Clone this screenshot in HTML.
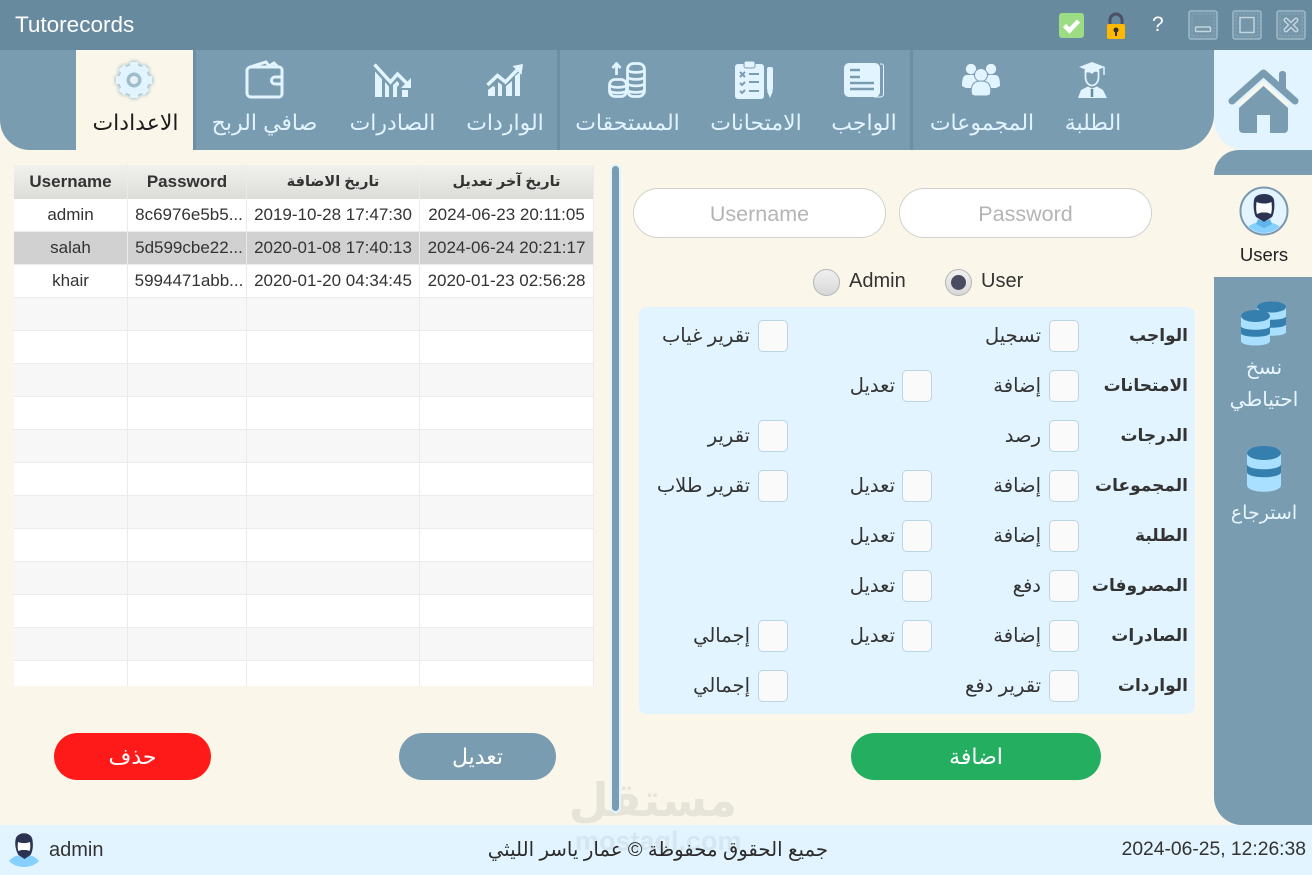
<!DOCTYPE html>
<html lang="ar"><head><meta charset="utf-8"><title>Tutorecords</title>
<style>
*{box-sizing:border-box;margin:0;padding:0}
html,body{width:1312px;height:875px;overflow:hidden;background:#faf7ea}
body{position:relative;font-family:"Liberation Sans","DejaVu Sans",sans-serif;color:#2b2b2b}
div,svg{position:absolute}
.nl{position:absolute;top:108px;height:30px;line-height:30px;font-size:22px;color:#e1f4ff;text-align:center;white-space:nowrap;direction:rtl}
.sep{top:50px;width:3px;height:100px;background:#6c8fa5}
.cb{width:30px;height:32px;background:#fafafa;border:1px solid #bcd5e3;border-radius:5px}
.lb{font-size:19.500px;line-height:30px;height:30px;white-space:nowrap;direction:rtl;text-align:right;color:#333}
.bl{font-size:17px;font-weight:bold;line-height:30px;height:30px;white-space:nowrap;direction:rtl;text-align:right;right:124px;color:#333}
.cell{font-size:17px;line-height:33px;height:33px;text-align:center;white-space:nowrap;color:#333;overflow:hidden}
.h{top:165px;height:34px;line-height:34px;font-size:17px;font-weight:bold;text-align:center;color:#333;background:linear-gradient(#f1f1ee,#dcdcd8);white-space:nowrap}
.inp{top:188px;height:50px;width:253px;background:#fff;border:1px solid #d0d0cc;border-radius:25px;text-align:center;line-height:50px;font-size:21.500px;color:#b4b4b4}
.btn{top:733px;height:47px;border-radius:24px;color:#fff;text-align:center;line-height:48px;font-size:22px}
.tx{font-size:20px;white-space:nowrap;line-height:26px}
</style></head><body>

<!-- title bar -->
<div style="left:0;top:0;width:1312px;height:50px;background:#678a9f"></div>
<div style="left:15px;top:10px;font-size:22.500px;line-height:30px;color:#fff">Tutorecords</div>
<svg style="left:1059px;top:13px" width="25" height="25" viewBox="0 0 25 25"><rect width="25" height="25" rx="3" fill="#9bdc85"/><path d="M5.500 12.500l5 5 9-9.500" fill="none" stroke="#fff" stroke-width="4.500"/></svg>
<svg style="left:1105px;top:12px" width="22" height="27" viewBox="0 0 22 27"><path d="M5 13V8a6 6 0 0 1 12 0v5" fill="none" stroke="#4c5065" stroke-width="3"/><rect x="2" y="12" width="18" height="15" rx="2" fill="#ffba00"/><circle cx="11" cy="18" r="2.500" fill="#333"/><rect x="10" y="18" width="2" height="6" fill="#333"/></svg>
<div style="left:1152px;top:10px;font-size:21px;line-height:30px;color:#fff">?</div>
<svg style="left:1188px;top:10px" width="118" height="30" viewBox="0 0 118 30" fill="none" stroke="#9db9c8" stroke-width="1.500"><rect x="1" y="1" width="28" height="28" rx="2" fill="#7595a9"/><rect x="4" y="4" width="22" height="22" stroke-dasharray="2 1.500" stroke-width="1" opacity=".6"/><rect x="7.500" y="17" width="15" height="4.500" rx="1" stroke="#c2d6e0"/><rect x="45" y="1" width="28" height="28" rx="2" fill="#7595a9"/><rect x="48" y="4" width="22" height="22" stroke-dasharray="2 1.500" stroke-width="1" opacity=".6"/><rect x="52" y="7.500" width="14" height="15" stroke="#c2d6e0"/><rect x="89" y="1" width="28" height="28" rx="2" fill="#7595a9"/><rect x="92" y="4" width="22" height="22" stroke-dasharray="2 1.500" stroke-width="1" opacity=".6"/><path d="M98 10l10 10M108 10L98 20" stroke="#c2d6e0" stroke-width="5" stroke-linecap="round"/><path d="M98 10l10 10M108 10L98 20" stroke="#7595a9" stroke-width="2" stroke-linecap="round"/></svg>

<!-- nav -->
<div style="left:0;top:50px;width:1214px;height:100px;background:#7a9cb1;border-radius:0 0 36px 30px"></div>
<div style="left:76px;top:50px;width:117px;height:100px;background:#faf7ea"></div>
<div class="sep" style="left:193px"></div>
<div class="sep" style="left:557px"></div>
<div class="sep" style="left:910px"></div>

<!-- nav icons -->
<svg style="left:113px;top:59px;filter:drop-shadow(0 0 2px #7a9cb1)" width="42" height="42" viewBox="0 0 42 42"><circle cx="21" cy="21" r="15" fill="#e1f4ff"/><g stroke="#e1f4ff" stroke-width="8"><path d="M21 3v7M21 32v7M3 21h7M32 21h7M8.300 8.300l5 5M28.700 28.700l5 5M33.700 8.300l-5 5M13.300 28.700l-5 5"/></g><circle cx="21" cy="21" r="7.500" fill="#9fbccd"/><circle cx="21" cy="21" r="4" fill="#e8f2f2"/></svg>
<svg style="left:245px;top:60px" width="40" height="39" viewBox="0 0 40 39" fill="none" stroke="#e1f4ff" stroke-width="3"><path d="M2 10v23a4 4 0 0 0 4 4h28a3 3 0 0 0 3-3V10a3 3 0 0 0-3-3H6a4 4 0 0 0-4 3z"/><path d="M5 7L21 2l3 4 5-3 4 4" /><path d="M37 17h-7a3.500 3.500 0 0 0 0 7h7"/></svg>
<svg style="left:373px;top:63px" width="39" height="34" viewBox="0 0 39 34" fill="#e1f4ff"><path d="M1.500 1.500l16 17.500 7-8 10 10" fill="none" stroke="#e1f4ff" stroke-width="3.500"/><path d="M38 15v10H28z"/><path d="M2 8.500l7 7.500v18H2zM12 19l4 4.500V34h-4zM20 22l4-4 2 2v2l-2 2v10h-4zM29 27h6v7h-6z"/></svg>
<svg style="left:486px;top:64px" width="38" height="32" viewBox="0 0 38 32" fill="#e1f4ff"><path d="M1.500 21l10-9.500 8 6.500L33 4" fill="none" stroke="#e1f4ff" stroke-width="3.500"/><path d="M37 0l-1.500 11-9-9z"/><path d="M2 32v-6l5-4 2 1v9zM12 32V18l4 3v11zM20 32V22l6-5v15zM29 32V12l5-4v24z"/></svg>
<svg style="left:608px;top:62px" width="38" height="36" viewBox="0 0 38 36"><g fill="none" stroke="#e1f4ff" stroke-width="2.800"><path d="M8.500 13V3"/><path d="M4.500 6l4-4.500 4 4.500"/><rect x="19.500" y="1.500" width="17" height="33" rx="6"/><path d="M19.500 8.500c4 2.500 13 2.500 17 0M19.500 15.500c4 2.500 13 2.500 17 0M19.500 22c4 2.500 13 2.500 17 0M19.500 28.500c4 2.500 13 2.500 17 0"/><rect x="1.500" y="17.500" width="17" height="17" rx="5.500" fill="#7a9cb1"/><path d="M1.500 23.500c4 2.500 13 2.500 17 0M1.500 29c4 2.500 13 2.500 17 0"/></g></svg>
<svg style="left:735px;top:60px" width="40" height="39" viewBox="0 0 40 39"><rect x="0" y="4" width="29" height="35" rx="3" fill="#e1f4ff"/><rect x="9" y="1" width="11" height="7" rx="2" fill="#e1f4ff" stroke="#7a9cb1"/><rect x="32" y="7" width="6" height="24" rx="2" fill="#e1f4ff"/><path d="M32 31h6l-3 7z" fill="#e1f4ff"/><g stroke="#7a9cb1" stroke-width="2" fill="none"><path d="M5 12l5 5M10 12l-5 5M5 23l2 2 3-3M5 31l2 2 3-3M14 14h10M14 22h10M14 31h10"/></g></svg>
<svg style="left:844px;top:62px" width="40" height="36" viewBox="0 0 40 36"><path d="M36 2h1.500a2 2 0 0 1 2 2v28a3 3 0 0 1-3 3H30" fill="none" stroke="#e1f4ff"/><rect x="0" y="1" width="36" height="34" rx="5" fill="#e1f4ff"/><g stroke="#7a9cb1" stroke-width="2.500"><path d="M6 8h10M6 15h10M6 21h24M6 27h24"/></g></svg>
<svg style="left:962px;top:64px" width="38" height="32" viewBox="0 0 38 32" fill="#e1f4ff"><circle cx="9" cy="5" r="5.200"/><circle cx="29" cy="5" r="5.200"/><path d="M0 22c0-7 1-11 5-11h8c4 0 5 4 5 11l-4 2H4zM20 22c0-7 1-11 5-11h8c4 0 5 4 5 11l-4 2H24z"/><circle cx="19" cy="11" r="6.500" stroke="#7a9cb1"/><path d="M10 31c-1-2-1-6 0-9 1-3 4-5 9-5s8 2 9 5c1 3 1 7 0 9l-3 1H13z" stroke="#7a9cb1"/></svg>
<svg style="left:1078px;top:62px" width="29" height="36" viewBox="0 0 29 36"><path d="M1 5L14 0l13 5-13 5z" fill="#e1f4ff"/><path d="M7.500 8v7c0 5 3 8.500 6.500 8.500s6.500-3.500 6.500-8.500V8" fill="none" stroke="#e1f4ff" stroke-width="1.800"/><path d="M7 6.500c4-2 10-2 14 0l0 4.500c-3-2-4-2-7 1-2-2-4-2-7-1z" fill="#e1f4ff"/><path d="M26 5v8" stroke="#e1f4ff" stroke-width="1.500"/><path d="M0 36l3-8 7-3.500 4 2 5-2 6 3.500 4 8z" fill="#e1f4ff"/><path d="M14 27v8" stroke="#678a9f" stroke-width="2.500"/></svg>

<!-- nav labels -->
<div class="nl" style="left:76px;width:119px;color:#1c1c1c">الاعدادات</div>
<div class="nl" style="left:195px;width:139px">صافي الربح</div>
<div class="nl" style="left:336px;width:113px">الصادرات</div>
<div class="nl" style="left:455px;width:100px">الواردات</div>
<div class="nl" style="left:560px;width:135px">المستحقات</div>
<div class="nl" style="left:697px;width:118px">الامتحانات</div>
<div class="nl" style="left:820px;width:88px">الواجب</div>
<div class="nl" style="left:915px;width:134px">المجموعات</div>
<div class="nl" style="left:1048px;width:90px">الطلبة</div>

<!-- home -->
<div style="left:1214px;top:50px;width:98px;height:100px;background:#e1f4ff;border-bottom-left-radius:30px"></div>
<svg style="left:1228px;top:68px" width="72" height="66" viewBox="0 0 72 66"><rect x="51" y="3" width="7" height="22" rx="3" fill="#7a9cb1"/><path d="M4 33L35.500 5 67 33" fill="none" stroke="#7a9cb1" stroke-width="7" stroke-linecap="round" stroke-linejoin="round"/><path d="M11 37L35.500 15 60 37" fill="none" stroke="#faf7ea" stroke-width="3"/><path d="M11 40L35.500 18 60 40v21a4 4 0 0 1-4 4H42V47H29v18H15a4 4 0 0 1-4-4z" fill="#7a9cb1"/></svg>

<!-- side -->
<div style="left:1214px;top:150px;width:98px;height:25px;background:#7a9cb1;border-top-left-radius:25px"></div>
<div style="left:1214px;top:277px;width:98px;height:548px;background:#7a9cb1;border-bottom-left-radius:28px"></div>
<svg style="left:1239px;top:186px" width="50" height="50" viewBox="0 0 50 50"><defs><clipPath id="c1"><circle cx="25" cy="25" r="22"/></clipPath></defs><circle cx="25" cy="25" r="23.500" fill="#e1f4ff" stroke="#7a98ae" stroke-width="2"/><g clip-path="url(#c1)"><path d="M4 50c2-10 10-14 21-14s19 4 21 14z" fill="#86d0ff"/><path d="M19 33l6 3 6-3 2 5-8 4-8-4z" fill="#5fb4ea"/><path d="M15 14c1-8 19-8 20 0 1 6 0 14-2 17l-8 5-8-5c-2-3-3-11-2-17z" fill="#2c3350"/><path d="M17.500 16c4 2 11 2 15 0 .5 5 .5 9-.5 12l-4-1.500h-6L18 28c-1-3-1-7-.5-12z" fill="#fff"/></g></svg>
<div style="left:1214px;top:242px;width:100px;text-align:center;font-size:18.500px;line-height:26px;color:#222">Users</div>

<svg style="left:1241px;top:301px" width="46" height="46" viewBox="0 0 46 46"><path d="M16 7c0-8 29-8 29 0v24c0 5-29 5-29 0z" fill="#a9e0ff"/><path d="M16 15c0 5 29 5 29 0v8c0 5-29 5-29 0z" fill="#347fae"/><ellipse cx="30.500" cy="6" rx="14.500" ry="5.500" fill="#347fae"/><path d="M0 15c0-7 29-7 29 0v25c0 6-29 6-29 0z" fill="#a9e0ff"/><ellipse cx="14.500" cy="15" rx="14.500" ry="6" fill="#347fae"/><path d="M0 25c0 5 29 5 29 0v7c0 5-29 5-29 0z" fill="#347fae"/></svg>
<div class="tx" style="left:1214px;top:352px;width:100px;text-align:center;color:#e8f6ff;direction:rtl;line-height:32px">نسخ<br>احتياطي</div>
<svg style="left:1247px;top:446px" width="34" height="46" viewBox="0 0 34 46"><path d="M0 7c0-9 34-9 34 0v32c0 9-34 9-34 0z" fill="#a9e0ff"/><ellipse cx="17" cy="7" rx="17" ry="7" fill="#347fae"/><path d="M0 18c0 7 34 7 34 0v8c0 7-34 7-34 0z" fill="#347fae"/></svg>
<div class="tx" style="left:1214px;top:501px;width:100px;text-align:center;color:#e8f6ff;direction:rtl;font-size:19px">استرجاع</div>

<!-- table -->
<div style="left:14px;top:165px;width:580px;height:521px;background:#fff"></div>
<div style="left:14px;top:298px;width:580px;height:33px;background:#f7f7f7"></div>
<div style="left:14px;top:364px;width:580px;height:33px;background:#f7f7f7"></div>
<div style="left:14px;top:430px;width:580px;height:33px;background:#f7f7f7"></div>
<div style="left:14px;top:496px;width:580px;height:33px;background:#f7f7f7"></div>
<div style="left:14px;top:562px;width:580px;height:33px;background:#f7f7f7"></div>
<div style="left:14px;top:628px;width:580px;height:33px;background:#f7f7f7"></div>
<div style="left:14px;top:232px;width:580px;height:33px;background:#d1d1d1"></div>
<div style="left:127px;top:165px;width:1px;height:521px;background:#ebebeb"></div>
<div style="left:246px;top:165px;width:1px;height:521px;background:#ebebeb"></div>
<div style="left:419px;top:165px;width:1px;height:521px;background:#ebebeb"></div>
<div style="left:593px;top:165px;width:1px;height:521px;background:#ebebeb"></div>
<div style="left:14px;top:231px;width:580px;height:1px;background:#ebebeb"></div>
<div style="left:14px;top:264px;width:580px;height:1px;background:#ebebeb"></div>
<div style="left:14px;top:297px;width:580px;height:1px;background:#ebebeb"></div>
<div style="left:14px;top:330px;width:580px;height:1px;background:#ebebeb"></div>
<div style="left:14px;top:363px;width:580px;height:1px;background:#ebebeb"></div>
<div style="left:14px;top:396px;width:580px;height:1px;background:#ebebeb"></div>
<div style="left:14px;top:429px;width:580px;height:1px;background:#ebebeb"></div>
<div style="left:14px;top:462px;width:580px;height:1px;background:#ebebeb"></div>
<div style="left:14px;top:495px;width:580px;height:1px;background:#ebebeb"></div>
<div style="left:14px;top:528px;width:580px;height:1px;background:#ebebeb"></div>
<div style="left:14px;top:561px;width:580px;height:1px;background:#ebebeb"></div>
<div style="left:14px;top:594px;width:580px;height:1px;background:#ebebeb"></div>
<div style="left:14px;top:627px;width:580px;height:1px;background:#ebebeb"></div>
<div style="left:14px;top:660px;width:580px;height:1px;background:#ebebeb"></div>

<div class="h" style="left:14px;width:113px">Username</div>
<div class="h" style="left:128px;width:118px">Password</div>
<div class="h" style="left:247px;width:172px;direction:rtl;font-size:14.500px">تاريخ الاضافة</div>
<div class="h" style="left:420px;width:173px;direction:rtl;font-size:14.500px">تاريخ آخر تعديل</div>

<div class="cell" style="left:14px;top:198px;width:113px">admin</div>
<div class="cell" style="left:130px;top:198px;width:118px">8c6976e5b5...</div>
<div class="cell" style="left:247px;top:198px;width:172px">2019-10-28 17:47:30</div>
<div class="cell" style="left:420px;top:198px;width:173px">2024-06-23 20:11:05</div>
<div class="cell" style="left:14px;top:231px;width:113px">salah</div>
<div class="cell" style="left:130px;top:231px;width:118px">5d599cbe22...</div>
<div class="cell" style="left:247px;top:231px;width:172px">2020-01-08 17:40:13</div>
<div class="cell" style="left:420px;top:231px;width:173px">2024-06-24 20:21:17</div>
<div class="cell" style="left:14px;top:264px;width:113px">khair</div>
<div class="cell" style="left:130px;top:264px;width:118px">5994471abb...</div>
<div class="cell" style="left:247px;top:264px;width:172px">2020-01-20 04:34:45</div>
<div class="cell" style="left:420px;top:264px;width:173px">2020-01-23 02:56:28</div>

<div class="btn" style="left:54px;width:157px;background:#ff1a1a;direction:rtl">حذف</div>
<div class="btn" style="left:399px;width:157px;background:#7a9cb1;direction:rtl">تعديل</div>

<!-- watermark under divider -->
<div style="left:575px;top:770px;width:162px;text-align:center;font-size:46px;font-weight:bold;line-height:60px;color:#8a8a8a;opacity:.17;direction:rtl;white-space:nowrap">مستقل</div>

<!-- divider -->
<div style="left:610px;top:164px;width:11px;height:649px;background:#e1f4ff;border-radius:6px"></div>
<div style="left:612px;top:166px;width:7px;height:645px;background:#7a9cb1;border-radius:4px"></div>

<!-- form -->
<div class="inp" style="left:633px">Username</div>
<div class="inp" style="left:899px">Password</div>
<div style="left:813px;top:269px;width:27px;height:27px;border-radius:50%;background:linear-gradient(#f0f0f0,#d8d8d8);border:1px solid #b5b5b5"></div>
<div style="left:945px;top:269px;width:27px;height:27px;border-radius:50%;background:linear-gradient(#f0f0f0,#d8d8d8);border:1px solid #b5b5b5"></div>
<div style="left:951px;top:275px;width:15px;height:15px;border-radius:50%;background:#4a4a60"></div>
<div style="left:849px;top:267px;font-size:20px;line-height:28px;color:#333">Admin</div>
<div style="left:981px;top:267px;font-size:20px;line-height:28px;color:#333">User</div>

<div style="left:639px;top:307px;width:556px;height:407px;background:#e1f4ff;border-radius:8px"></div>

<div class="bl" style="top:321px">الواجب</div>
<div class="bl" style="top:371px">الامتحانات</div>
<div class="bl" style="top:421px">الدرجات</div>
<div class="bl" style="top:471px">المجموعات</div>
<div class="bl" style="top:521px">الطلبة</div>
<div class="bl" style="top:571px">المصروفات</div>
<div class="bl" style="top:621px">الصادرات</div>
<div class="bl" style="top:671px">الواردات</div>

<div class="cb" style="left:1049px;top:320px"></div><div class="lb" style="right:271px;top:321px">تسجيل</div>
<div class="cb" style="left:758px;top:320px"></div><div class="lb" style="right:562px;top:321px">تقرير غياب</div>
<div class="cb" style="left:1049px;top:370px"></div><div class="lb" style="right:271px;top:371px">إضافة</div>
<div class="cb" style="left:902px;top:370px"></div><div class="lb" style="right:417px;top:371px">تعديل</div>
<div class="cb" style="left:1049px;top:420px"></div><div class="lb" style="right:271px;top:421px">رصد</div>
<div class="cb" style="left:758px;top:420px"></div><div class="lb" style="right:562px;top:421px">تقرير</div>
<div class="cb" style="left:1049px;top:470px"></div><div class="lb" style="right:271px;top:471px">إضافة</div>
<div class="cb" style="left:902px;top:470px"></div><div class="lb" style="right:417px;top:471px">تعديل</div>
<div class="cb" style="left:758px;top:470px"></div><div class="lb" style="right:562px;top:471px">تقرير طلاب</div>
<div class="cb" style="left:1049px;top:520px"></div><div class="lb" style="right:271px;top:521px">إضافة</div>
<div class="cb" style="left:902px;top:520px"></div><div class="lb" style="right:417px;top:521px">تعديل</div>
<div class="cb" style="left:1049px;top:570px"></div><div class="lb" style="right:271px;top:571px">دفع</div>
<div class="cb" style="left:902px;top:570px"></div><div class="lb" style="right:417px;top:571px">تعديل</div>
<div class="cb" style="left:1049px;top:620px"></div><div class="lb" style="right:271px;top:621px">إضافة</div>
<div class="cb" style="left:902px;top:620px"></div><div class="lb" style="right:417px;top:621px">تعديل</div>
<div class="cb" style="left:758px;top:620px"></div><div class="lb" style="right:562px;top:621px">إجمالي</div>
<div class="cb" style="left:1049px;top:670px"></div><div class="lb" style="right:271px;top:671px">تقرير دفع</div>
<div class="cb" style="left:758px;top:670px"></div><div class="lb" style="right:562px;top:671px">إجمالي</div>

<div class="btn" style="left:851px;width:250px;background:#23ae60;direction:rtl">اضافة</div>

<!-- footer -->
<div style="left:0;top:825px;width:1312px;height:50px;background:#e1f4ff"></div>
<div style="left:575px;top:826px;width:162px;text-align:center;font-size:27px;font-weight:bold;line-height:30px;color:#8a8a8a;opacity:.12;white-space:nowrap">mostaql.com</div>
<svg style="left:8px;top:832px" width="32" height="36" viewBox="0 0 32 36"><path d="M1 29c4-5 9-6 15-6s11 1 15 6c-4 4-9 6-15 6s-11-2-15-6z" fill="#86d0ff"/><path d="M7.500 8c1-9 16-9 17 0 1 6 0 12-2 15l-6 4-6-4c-2-3-4-9-3-15z" fill="#2c3350"/><path d="M10 10c4 1.500 8 1.500 12 0 .5 4 .5 7-.5 9l-3-1h-5l-3 1c-1-2-1-5-.5-9z" fill="#fff"/></svg>
<div style="left:49px;top:836px;font-size:20px;line-height:28px;color:#333">admin</div>
<div style="left:400px;top:836px;width:428px;text-align:right;font-size:19.700px;line-height:28px;color:#2b2b2b;direction:rtl;white-space:nowrap">جميع الحقوق محفوظة © عمار ياسر الليثي</div>
<div style="right:6px;top:836px;font-size:19.300px;line-height:28px;color:#333;white-space:nowrap">2024-06-25, 12:26:38</div>
</body></html>
